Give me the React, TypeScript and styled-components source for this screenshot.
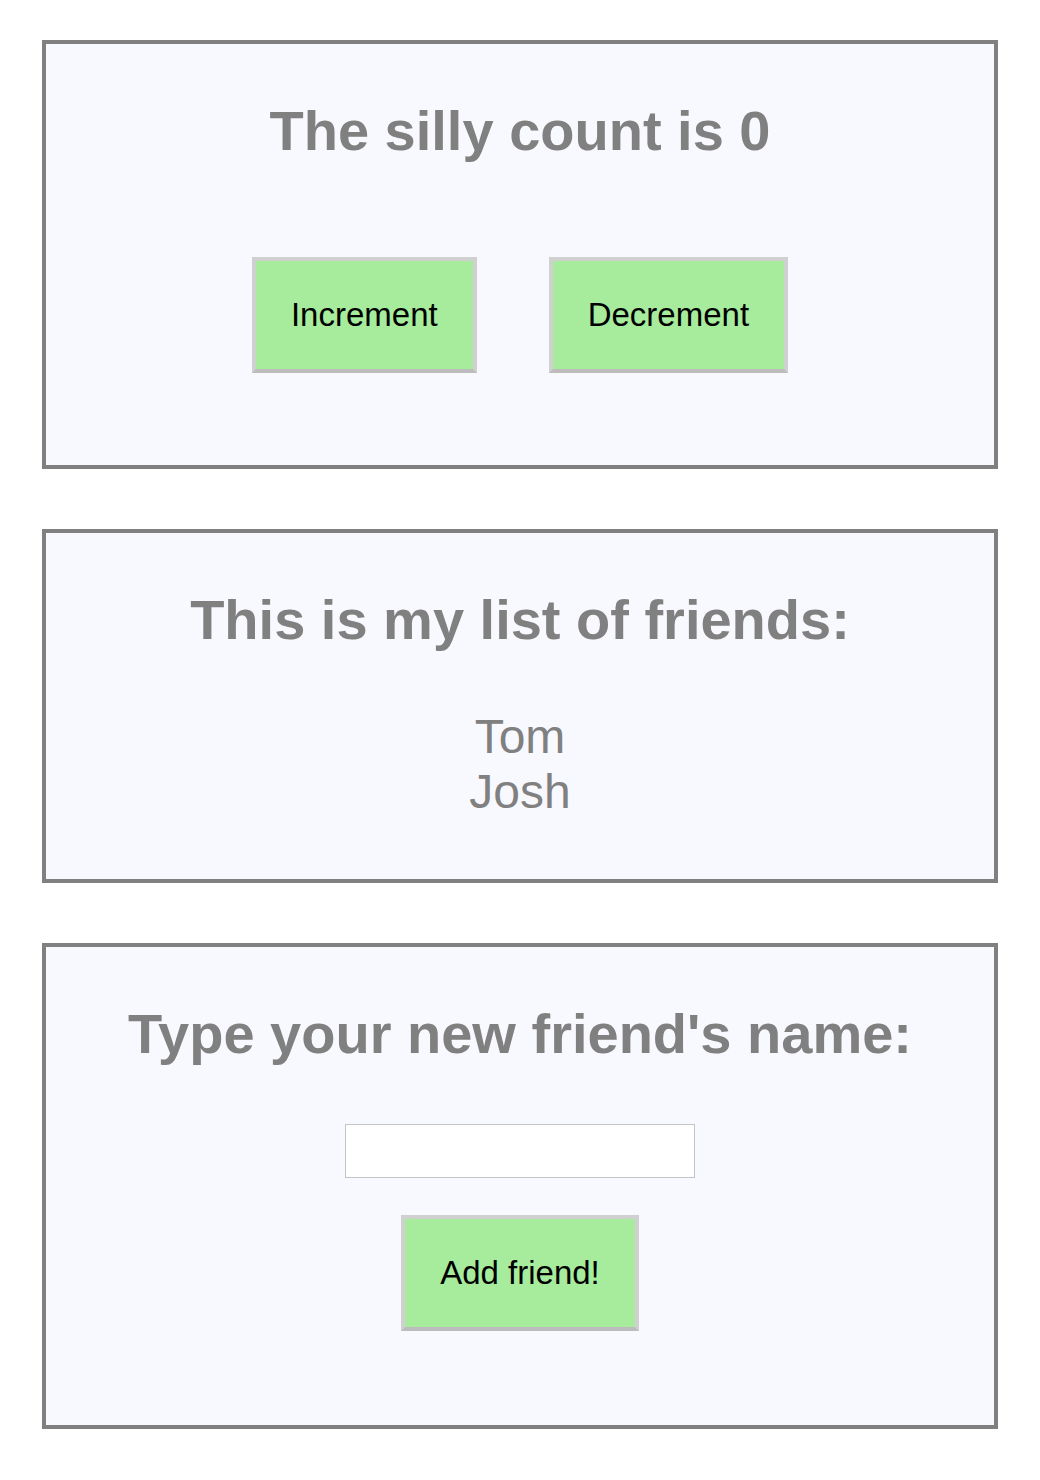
import React, { useState } from "react";
import styled, { createGlobalStyle } from "styled-components";

const Global = createGlobalStyle`
  html, body { margin: 0; padding: 0; background: #ffffff; }
  body { font-family: "Liberation Sans", Arial, sans-serif; }
  * { box-sizing: border-box; }
`;

const Page = styled.div`
  display: flex;
  flex-direction: column;
  gap: 60px;
  padding: 40px 42px 50px;
`;

const Card = styled.section<{ $bottom: number }>`
  display: flex;
  flex-direction: column;
  align-items: center;
  background: #f8f8ff;
  border: 4px solid #808080;
  padding: 54px 0 ${(p) => p.$bottom}px;
`;

const Heading = styled.h1`
  margin: 0;
  font-size: 56px;
  font-weight: 700;
  line-height: normal;
  color: #808080;
  text-align: center;
`;

const ButtonRow = styled.div`
  display: flex;
  gap: 72px;
  margin-top: 94px;
`;

const GreenButton = styled.button<{ $top?: number }>`
  font-family: "Liberation Sans", Arial, sans-serif;
  font-size: 33px;
  line-height: normal;
  color: #000;
  background: #a6ec9c;
  border: 4px solid #d0d0d0;
  border-bottom-color: #bcbcbc;
  padding: 35px;
  margin-top: ${(p) => p.$top ?? 0}px;
  cursor: pointer;
`;

const FriendList = styled.ul`
  list-style: none;
  margin: 57px 0 0;
  padding: 0;
  text-align: center;
`;

const Friend = styled.li`
  font-size: 48px;
  line-height: normal;
  color: #808080;
`;

const NameInput = styled.input`
  width: 350px;
  height: 54px;
  margin-top: 58px;
  border: 1px solid #c4c4c4;
  background: #ffffff;
  font-size: 24px;
  font-family: "Liberation Sans", Arial, sans-serif;
  padding: 0 8px;
  outline: none;
`;

export default function App() {
  const [count, setCount] = useState(0);
  const [friends, setFriends] = useState<string[]>(["Tom", "Josh"]);
  const [name, setName] = useState("");

  return (
    <>
      <Global />
      <Page>
        <Card $bottom={92}>
          <Heading>The silly count is {count}</Heading>
          <ButtonRow>
            <GreenButton onClick={() => setCount(count + 1)}>Increment</GreenButton>
            <GreenButton onClick={() => setCount(count - 1)}>Decrement</GreenButton>
          </ButtonRow>
        </Card>
        <Card $bottom={60}>
          <Heading>This is my list of friends:</Heading>
          <FriendList>
            {friends.map((f) => (
              <Friend key={f}>{f}</Friend>
            ))}
          </FriendList>
        </Card>
        <Card $bottom={94}>
          <Heading>Type your new friend's name:</Heading>
          <NameInput value={name} onChange={(e) => setName(e.target.value)} />
          <GreenButton
            $top={37}
            onClick={() => {
              if (name.trim()) {
                setFriends([...friends, name.trim()]);
                setName("");
              }
            }}
          >
            Add friend!
          </GreenButton>
        </Card>
      </Page>
    </>
  );
}
